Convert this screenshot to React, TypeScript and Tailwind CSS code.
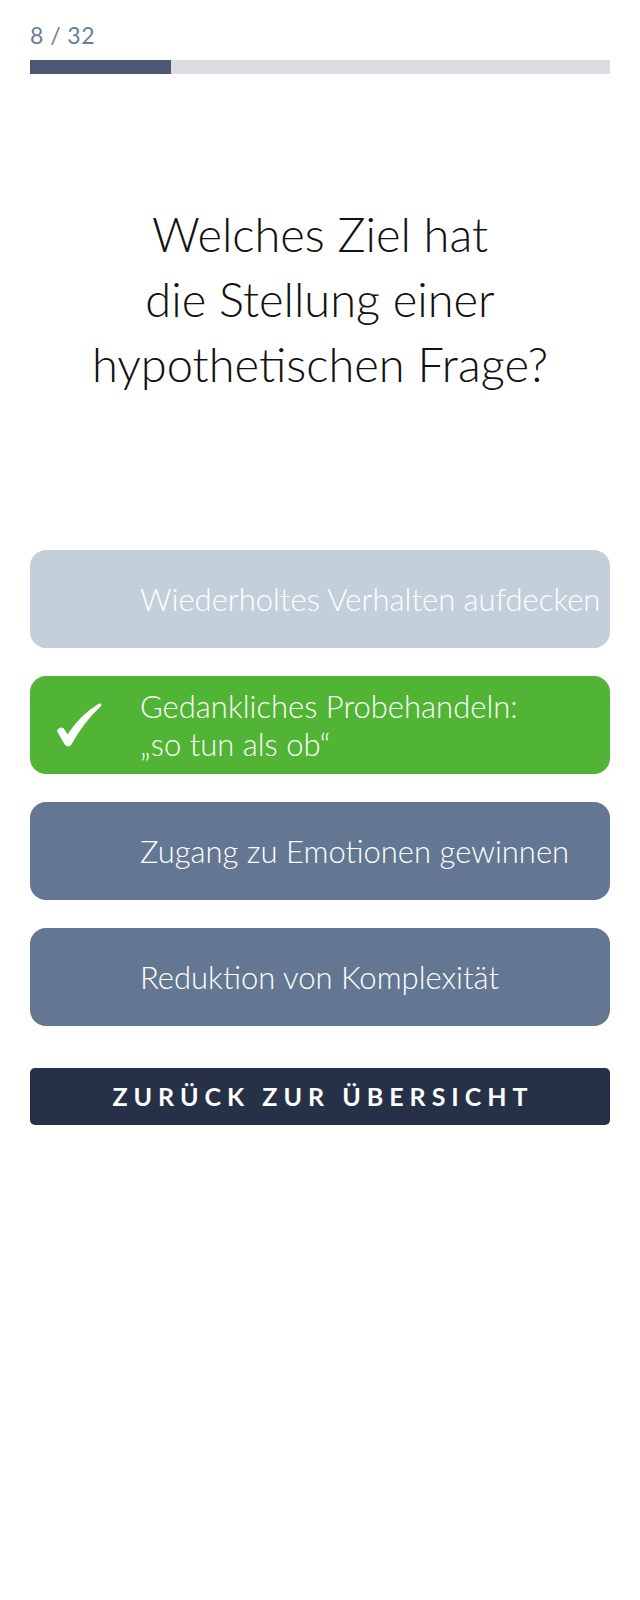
import React from 'react';

const options = [
  { label: 'Wiederholtes Verhalten aufdecken', state: 'dim' },
  { label: 'Gedankliches Probehandeln:\n„so tun als ob“', state: 'correct' },
  { label: 'Zugang zu Emotionen gewinnen', state: 'idle' },
  { label: 'Reduktion von Komplexität', state: 'idle' },
];

const Check = () => (
  <svg width="46" height="44" viewBox="0 0 46 44" className="absolute left-[26px] top-[27px]">
    <path
      d="M1 28 Q 3 23 7.5 25 L 11.5 31.5 Q 24 12 43 0.5 Q 46.5 0 45 3 Q 27 20 15.5 41.5 Q 12.5 45 9 42 Z"
      fill="#ffffff"
    />
  </svg>
);

const App = () => {
  return (
    <div className="w-[640px] min-h-[1600px] bg-white px-[30px] font-['Lato',sans-serif]">
      <div className="pt-[22px] h-[60px]">
        <div className="text-[23px] leading-[26px] text-[#6b7e9a] tracking-[0.02em]">8 / 32</div>
      </div>

      <div className="h-[14px] w-full bg-[#dcdde2] flex">
        <div className="h-full w-[141px] bg-[#4b5773]" />
      </div>

      <div className="mt-[128px] text-center text-[47px] leading-[65px] font-light text-[#111111]">
        Welches Ziel hat
        <br />
        die Stellung einer
        <br />
        hypothetischen Frage?
      </div>

      <div className="mt-[153px] flex flex-col gap-[28px]">
        {options.map((o) => (
          <div
            key={o.label}
            className={
              'relative h-[98px] rounded-[16px] flex items-center pl-[110px] text-white text-[31px] leading-[38px] font-light whitespace-pre overflow-hidden ' +
              (o.state === 'dim'
                ? 'bg-[#c3cfdb]'
                : o.state === 'correct'
                ? 'bg-[#51b434]'
                : 'bg-[#647792]')
            }
          >
            {o.state === 'correct' && <Check />}
            <span>{o.label}</span>
          </div>
        ))}
      </div>

      <button className="mt-[42px] w-full h-[57px] rounded-[5px] bg-[#263147] text-white text-[25px] font-bold tracking-[0.24em] pl-[6px] flex items-center justify-center">
        ZURÜCK ZUR ÜBERSICHT
      </button>
    </div>
  );
};

export default App;
